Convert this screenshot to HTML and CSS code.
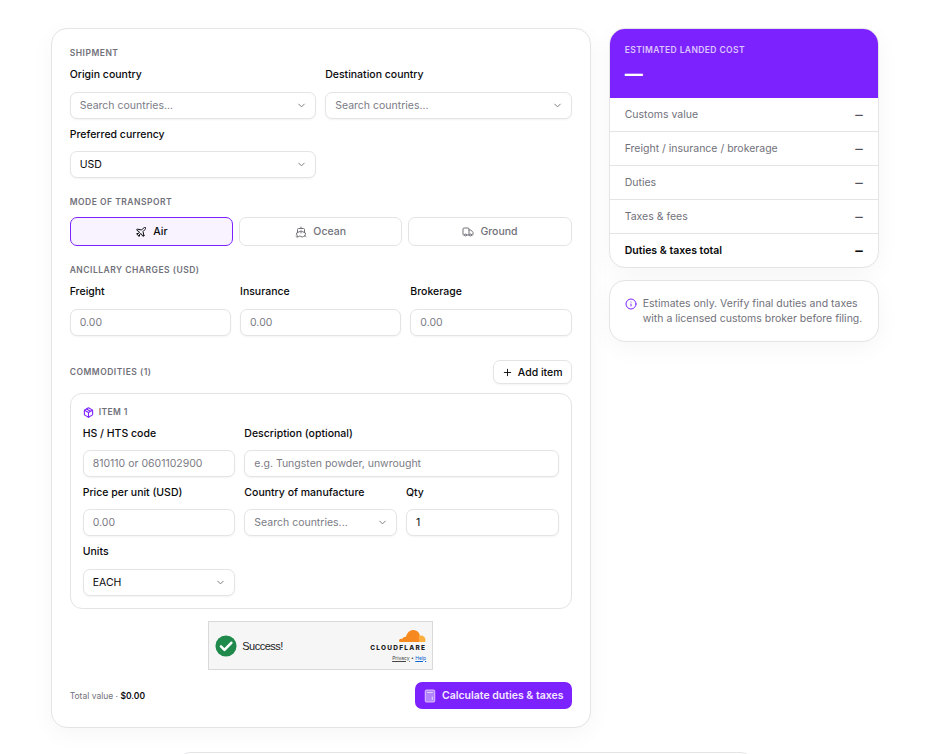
FILE: index.html
```html
<!DOCTYPE html>
<html lang="en">
<head>
<meta charset="utf-8">
<title>Landed cost calculator</title>
<link rel="stylesheet" href="styles.css">
</head>
<body>
<main class="layout">
  <section class="card form">
    <h2 class="eyebrow">SHIPMENT</h2>
    <div class="grid two">
      <div class="field"><label>Origin country</label><div class="input select muted">Search countries...<svg class="chev" viewBox="0 0 24 24"><path d="m6 9 6 6 6-6"/></svg></div></div>
      <div class="field"><label>Destination country</label><div class="input select muted">Search countries...<svg class="chev" viewBox="0 0 24 24"><path d="m6 9 6 6 6-6"/></svg></div></div>
      <div class="field"><label>Preferred currency</label><div class="input select">USD<svg class="chev" viewBox="0 0 24 24"><path d="m6 9 6 6 6-6"/></svg></div></div>
    </div>

    <h2 class="eyebrow sec-mode">MODE OF TRANSPORT</h2>
    <div class="modes">
      <button class="mode active"><svg class="ico" viewBox="0 0 24 24"><path d="M17.800 19.200 16 11l3.500-3.500C21 6 21.500 4 21 3c-1-.5-3 0-4.500 1.500L13 8 4.800 6.200c-.5-.1-.9.1-1.100.5l-.3.5c-.2.500-.1 1 .3 1.300L9 12l-2 3H4l-1 1 3 2 2 3 1-1v-3l3-2 3.500 5.300c.3.400.8.500 1.300.3l.5-.2c.4-.3.6-.7.5-1.200z"/></svg>Air</button>
      <button class="mode"><svg class="ico" viewBox="0 0 24 24"><path d="M12 10.190V14M12 2v3M19 13V7a2 2 0 0 0-2-2H7a2 2 0 0 0-2 2v6"/><path d="M19.380 20A11.600 11.600 0 0 0 21 14l-8.190-3.640a2 2 0 0 0-1.620 0L3 14a11.600 11.600 0 0 0 2.810 7.760"/><path d="M2 21c.6.5 1.200 1 2.500 1C7 22 7 20 9.500 20c2.600 0 2.400 2 5 2 2.500 0 2.500-2 5-2 1.300 0 1.900.5 2.500 1"/></svg>Ocean</button>
      <button class="mode"><svg class="ico" viewBox="0 0 24 24"><path d="M14 18V6a2 2 0 0 0-2-2H4a2 2 0 0 0-2 2v11a1 1 0 0 0 1 1h2M15 18H9M19 18h2a1 1 0 0 0 1-1v-3.650a1 1 0 0 0-.22-.62l-3.480-4.350A1 1 0 0 0 17.520 8H14"/><circle cx="17" cy="18" r="2"/><circle cx="7" cy="18" r="2"/></svg>Ground</button>
    </div>

    <h2 class="eyebrow sec-anc">ANCILLARY CHARGES (USD)</h2>
    <div class="grid three">
      <div class="field"><label>Freight</label><div class="input muted">0.00</div></div>
      <div class="field"><label>Insurance</label><div class="input muted">0.00</div></div>
      <div class="field"><label>Brokerage</label><div class="input muted">0.00</div></div>
    </div>

    <div class="commod-head">
      <h2 class="eyebrow flat">COMMODITIES (1)</h2>
      <button class="add"><svg class="plus" viewBox="0 0 24 24"><path d="M5 12h14M12 5v14"/></svg>Add item</button>
    </div>

    <div class="item">
      <div class="item-title"><svg class="box" viewBox="0 0 24 24"><path d="M21 8a2 2 0 0 0-1-1.730l-7-4a2 2 0 0 0-2 0l-7 4A2 2 0 0 0 3 8v8a2 2 0 0 0 1 1.730l7 4a2 2 0 0 0 2 0l7-4A2 2 0 0 0 21 16Z"/><path d="m3.300 7 8.700 5 8.700-5M12 22V12M7.500 4.270l9 5.150"/></svg>ITEM 1</div>
      <div class="item-grid">
        <div class="field c4"><label>HS / HTS code</label><div class="input muted">810110 or 0601102900</div></div>
        <div class="field c8"><label>Description (optional)</label><div class="input muted">e.g. Tungsten powder, unwrought</div></div>
        <div class="field c4"><label>Price per unit (USD)</label><div class="input muted">0.00</div></div>
        <div class="field c4"><label>Country of manufacture</label><div class="input select muted">Search countries...<svg class="chev" viewBox="0 0 24 24"><path d="m6 9 6 6 6-6"/></svg></div></div>
        <div class="field c4"><label>Qty</label><div class="input">1</div></div>
        <div class="field c4"><label>Units</label><div class="input select">EACH<svg class="chev" viewBox="0 0 24 24"><path d="m6 9 6 6 6-6"/></svg></div></div>
      </div>
    </div>

    <div class="turnstile-row">
      <div class="turnstile">
        <svg class="tick" viewBox="0 0 24 24"><circle cx="12" cy="12" r="11.500"/><path d="m6.500 12.500 3.800 3.800 7.500-7.800"/></svg>
        <span class="ok">Success!</span>
        <div class="cf">
          <svg class="cloud" viewBox="0 0 28 14"><path d="M21.500 13H2.500c-.8 0-1.500-.6-1.500-1.300 0-1 1-1.900 2.300-1.900.3 0 .6 0 .9.100C5 8.300 6.600 7.500 8 7.700 9 3.700 12 1 15.500 1c3.300 0 5.600 2.100 6.300 5.200Z" fill="#f6891f"/><path d="M21 13h6c.3-.7.500-1.200.5-2 0-2.500-2-4.500-4.700-4.500-.9 0-1.600.2-2 .4Z" fill="#fbb040"/></svg>
          <div class="cf-name">CLOUDFLARE</div>
          <div class="cf-links"><a>Privacy</a> • <a class="help">Help</a></div>
        </div>
      </div>
    </div>

    <div class="foot">
      <div class="total">Total value · <b>$0.00</b></div>
      <button class="calc"><svg class="calc-ico" viewBox="0 0 24 24"><rect x="4" y="2" width="16" height="20" rx="2"/><path d="M8 6h8M16 14v4" class="calc-line"/></svg>Calculate duties &amp; taxes</button>
    </div>
  </section>

  <aside class="side">
    <section class="card summary">
      <div class="hero">
        <div class="hero-label">ESTIMATED LANDED COST</div>
        <div class="hero-value">—</div>
      </div>
      <div class="row"><span>Customs value</span><span class="dash">–</span></div>
      <div class="row"><span>Freight / insurance / brokerage</span><span class="dash">–</span></div>
      <div class="row"><span>Duties</span><span class="dash">–</span></div>
      <div class="row"><span>Taxes &amp; fees</span><span class="dash">–</span></div>
      <div class="row strong"><span>Duties &amp; taxes total</span><span class="dash">–</span></div>
    </section>
    <section class="card note">
      <svg class="info" viewBox="0 0 24 24"><circle cx="12" cy="12" r="10"/><path d="M12 16v-4M12 8h.01"/></svg>
      <p>Estimates only. Verify final duties and taxes with a licensed customs broker before filing.</p>
    </section>
  </aside>
</main>
<div class="next-card"></div>
</body>
</html>
```

FILE: styles.css
```css
* { box-sizing: border-box; }
html, body { margin: 0; height: 754px; overflow: hidden; }
body {
  background: #fff;
  color: #0f0f14;
  font-family: Inter, "Liberation Sans", sans-serif;
  font-size: 11px;
  position: relative;
}
h2, p { margin: 0; }
.layout {
  display: flex;
  align-items: flex-start;
  gap: 18px;
  padding: 28px 0 0 50.700px;
}
.card {
  background: #fff;
  border: 1px solid #e4e4e7;
  border-radius: 16px;
  box-shadow: 0 6px 24px rgba(0, 0, 0, .04);
}
.form {
  width: 540px;
  height: 700px;
  flex: none;
  padding: 18px;
}
.eyebrow {
  font-size: 8.500px;
  line-height: 12px;
  font-weight: 600;
  letter-spacing: .5px;
  color: #71717a;
}
.sec-mode { margin-top: 18px; }
.sec-anc { margin-top: 18px; }
.grid { display: grid; column-gap: 9px; }
.two { grid-template-columns: 1fr 1fr; margin-top: 8px; row-gap: 8px; }
.three { grid-template-columns: repeat(3, 1fr); margin-top: 8px; }
.field { display: flex; flex-direction: column; min-width: 0; }
.field label {
  height: 16px;
  line-height: 16px;
  font-size: 10.500px;
  font-weight: 500;
  color: #09090b;
  margin-bottom: 8.500px;
}
.input {
  height: 27px;
  border: 1px solid #e4e4e7;
  border-radius: 7px;
  background: #fff;
  padding: 0 9px;
  display: flex;
  align-items: center;
  justify-content: space-between;
  font-size: 10.500px;
  color: #09090b;
  box-shadow: 0 1px 2px rgba(0, 0, 0, .05);
  white-space: nowrap;
  overflow: hidden;
}
.muted { color: #7b7b85; }
.chev {
  width: 11px;
  height: 11px;
  fill: none;
  stroke: #71717a;
  stroke-width: 2;
  stroke-linecap: round;
  stroke-linejoin: round;
  flex: none;
  margin-right: -1px;
}
.modes {
  display: grid;
  grid-template-columns: repeat(3, 1fr);
  gap: 6px;
  margin-top: 9px;
}
.mode {
  height: 29px;
  border: 1px solid #e4e4e7;
  border-radius: 7px;
  background: #fff;
  font: 500 10.500px Inter, "Liberation Sans", sans-serif;
  color: #71717a;
  display: flex;
  align-items: center;
  justify-content: center;
  gap: 6px;
  padding: 0;
}
.mode.active {
  border-color: #7c22ff;
  background: #f8f3ff;
  color: #09090b;
}
.ico {
  width: 12px;
  height: 12px;
  fill: none;
  stroke: currentColor;
  stroke-width: 2;
  stroke-linecap: round;
  stroke-linejoin: round;
}
.commod-head {
  display: flex;
  justify-content: space-between;
  align-items: center;
  margin-top: 24.500px;
}
.flat { margin: 0; }
.add {
  height: 24px;
  width: 79px;
  border: 1px solid #e4e4e7;
  border-radius: 7px;
  background: #fff;
  font: 500 10.500px Inter, "Liberation Sans", sans-serif;
  color: #09090b;
  display: flex;
  align-items: center;
  justify-content: center;
  gap: 5px;
  padding: 0;
  box-shadow: 0 1px 2px rgba(0, 0, 0, .05);
}
.plus {
  width: 11px;
  height: 11px;
  fill: none;
  stroke: #09090b;
  stroke-width: 2;
  stroke-linecap: round;
}
.item {
  margin-top: 9px;
  height: 216px;
  border: 1px solid #e4e4e7;
  border-radius: 12px;
  padding: 12px;
}
.item-title {
  display: flex;
  align-items: center;
  gap: 5px;
  height: 12px;
  font-size: 8.500px;
  font-weight: 600;
  letter-spacing: .4px;
  color: #71717a;
}
.box {
  width: 11px;
  height: 11px;
  fill: none;
  stroke: #7c22ff;
  stroke-width: 2.400;
  stroke-linecap: round;
  stroke-linejoin: round;
}
.item-grid {
  display: grid;
  grid-template-columns: repeat(12, 1fr);
  column-gap: 9px;
  row-gap: 7.800px;
  margin-top: 7.500px;
}
.c4 { grid-column: span 4; }
.c8 { grid-column: span 8; }
.turnstile-row {
  display: flex;
  justify-content: center;
  margin-top: 12px;
}
.turnstile {
  width: 225px;
  height: 49px;
  background: #f6f6f6;
  border: 1px solid #d9d9d9;
  display: flex;
  align-items: center;
  padding: 0 6px;
}
.tick { width: 22px; height: 22px; flex: none; }
.tick circle { fill: #1f8a4c; }
.tick path { fill: none; stroke: #fff; stroke-width: 2.800; stroke-linecap: round; stroke-linejoin: round; }
.ok {
  margin-left: 5px;
  font-family: "Liberation Sans", sans-serif;
  font-size: 11px;
  letter-spacing: -.5px;
  color: #232323;
}
.cf {
  margin-left: auto;
  display: flex;
  flex-direction: column;
  align-items: flex-end;
  margin-bottom: 1px;
}
.cloud { width: 28px; height: 14px; display: block; }
.cf-name {
  font-size: 6.500px;
  line-height: 8px;
  font-weight: 800;
  letter-spacing: 1.250px;
  color: #1d1d1d;
  margin-top: 1px;
}
.cf-links {
  font-size: 5px;
  line-height: 7px;
  margin-top: 3px;
  color: #444;
}
.cf-links a { text-decoration: underline; }
.cf-links .help { color: #0a66d0; }
.foot {
  display: flex;
  justify-content: space-between;
  align-items: center;
  margin-top: 12px;
}
.total { font-size: 8.500px; color: #71717a; }
.total b { font-weight: 600; color: #09090b; }
.calc {
  width: 157px;
  height: 27px;
  border: 0;
  border-radius: 7px;
  background: #7c22ff;
  color: #f3e8ff;
  font: 600 10.500px Inter, "Liberation Sans", sans-serif;
  display: flex;
  align-items: center;
  justify-content: center;
  gap: 5px;
  padding: 0;
}
.calc-ico { width: 14px; height: 14px; }
.calc-ico rect { fill: #b285ff; stroke: #d4b5ff; stroke-width: 2; }
.calc-line { fill: none; stroke: #e3d0ff; stroke-width: 2; stroke-linecap: round; }
.side {
  width: 270px;
  flex: none;
  display: flex;
  flex-direction: column;
  gap: 12px;
}
.summary { overflow: hidden; }
.hero {
  margin: -1px -1px 0;
  height: 70px;
  background: #7c22ff;
  padding: 16px 16px 0;
  color: #fff;
  border-radius: 16px 16px 0 0;
}
.hero-label {
  font-size: 8.500px;
  line-height: 12px;
  font-weight: 600;
  letter-spacing: .4px;
  color: #dcc4ff;
}
.hero-value {
  font-size: 18px;
  line-height: 24px;
  font-weight: 800;
  margin-top: 6px;
  color: #fff;
}
.row {
  display: flex;
  justify-content: space-between;
  align-items: center;
  height: 34px;
  padding: 0 15px;
  font-size: 10.500px;
  color: #71717a;
  border-bottom: 1px solid #e4e4e7;
}
.row:last-child { border-bottom: 0; height: 33px; }
.dash { color: #52525b; font-size: 15px; font-weight: 400; line-height: 16px; }
.strong { color: #09090b; font-weight: 600; }
.strong .dash { color: #09090b; font-weight: 600; }
.note {
  height: 62px;
  padding: 15px 15px 0;
  display: flex;
  gap: 7px;
}
.info {
  width: 12px;
  height: 12px;
  flex: none;
  margin-top: 2px;
  fill: none;
  stroke: #7c22ff;
  stroke-width: 2;
  stroke-linecap: round;
}
.note p {
  font-size: 10.500px;
  line-height: 15px;
  color: #71717a;
  margin-left: -1px;
}
.next-card {
  position: absolute;
  left: 178px;
  top: 752px;
  width: 575px;
  height: 40px;
  background: #fff;
  border: 1px solid #e4e4e7;
  border-radius: 12px;
}
```
